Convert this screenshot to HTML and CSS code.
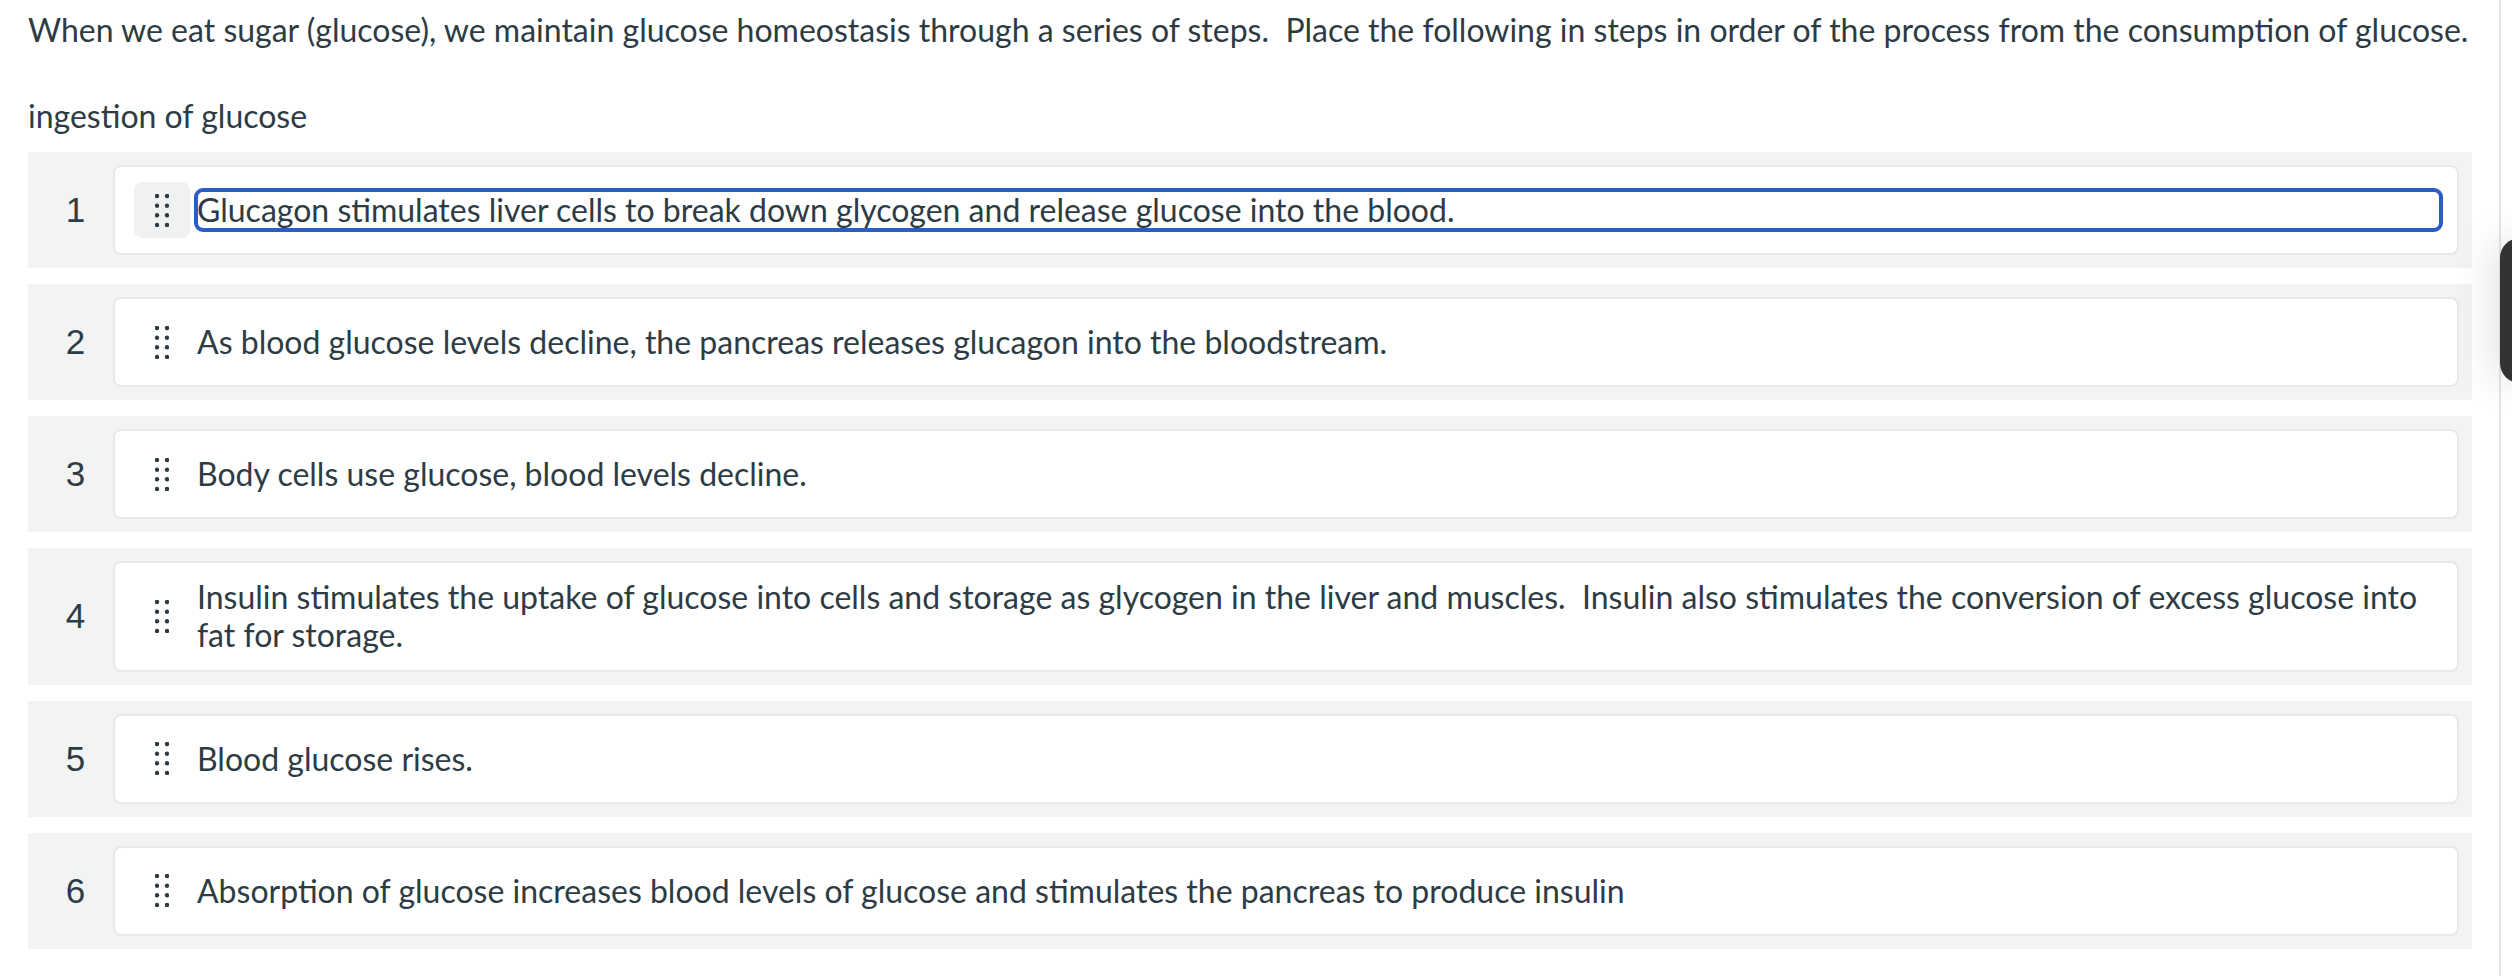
FILE: index.html
```html
<!DOCTYPE html>
<html lang="en">
<head>
<meta charset="utf-8">
<title>Ordering question</title>
<link rel="stylesheet" href="styles.css">
</head>
<body>
<div class="page">
  <main class="quiz">
    <p class="question">When we eat sugar (glucose), we maintain glucose homeostasis through a series of steps.&nbsp; Place the following in steps in order of the process from the consumption of glucose.</p>
    <p class="top-label">ingestion of glucose</p>
    <ol class="order-list">
      <li class="band">
        <span class="num">1</span>
        <div class="card">
          <span class="handle handle-active"><svg class="dots" viewBox="0 0 14 33" width="14" height="33"><g fill="#2d3b45"><circle cx="2" cy="2" r="2.2"/><circle cx="12" cy="2" r="2.2"/><circle cx="2" cy="11.7" r="2.2"/><circle cx="12" cy="11.7" r="2.2"/><circle cx="2" cy="21.3" r="2.2"/><circle cx="12" cy="21.3" r="2.2"/><circle cx="2" cy="31" r="2.2"/><circle cx="12" cy="31" r="2.2"/></g></svg></span>
          <span class="item-text focused">Glucagon stimulates liver cells to break down glycogen and release glucose into the blood.</span>
        </div>
      </li>
      <li class="band">
        <span class="num">2</span>
        <div class="card">
          <span class="handle"><svg class="dots" viewBox="0 0 14 33" width="14" height="33"><g fill="#2d3b45"><circle cx="2" cy="2" r="2.2"/><circle cx="12" cy="2" r="2.2"/><circle cx="2" cy="11.7" r="2.2"/><circle cx="12" cy="11.7" r="2.2"/><circle cx="2" cy="21.3" r="2.2"/><circle cx="12" cy="21.3" r="2.2"/><circle cx="2" cy="31" r="2.2"/><circle cx="12" cy="31" r="2.2"/></g></svg></span>
          <span class="item-text">As blood glucose levels decline, the pancreas releases glucagon into the bloodstream.</span>
        </div>
      </li>
      <li class="band">
        <span class="num">3</span>
        <div class="card">
          <span class="handle"><svg class="dots" viewBox="0 0 14 33" width="14" height="33"><g fill="#2d3b45"><circle cx="2" cy="2" r="2.2"/><circle cx="12" cy="2" r="2.2"/><circle cx="2" cy="11.7" r="2.2"/><circle cx="12" cy="11.7" r="2.2"/><circle cx="2" cy="21.3" r="2.2"/><circle cx="12" cy="21.3" r="2.2"/><circle cx="2" cy="31" r="2.2"/><circle cx="12" cy="31" r="2.2"/></g></svg></span>
          <span class="item-text">Body cells use glucose, blood levels decline.</span>
        </div>
      </li>
      <li class="band">
        <span class="num">4</span>
        <div class="card">
          <span class="handle"><svg class="dots" viewBox="0 0 14 33" width="14" height="33"><g fill="#2d3b45"><circle cx="2" cy="2" r="2.2"/><circle cx="12" cy="2" r="2.2"/><circle cx="2" cy="11.7" r="2.2"/><circle cx="12" cy="11.7" r="2.2"/><circle cx="2" cy="21.3" r="2.2"/><circle cx="12" cy="21.3" r="2.2"/><circle cx="2" cy="31" r="2.2"/><circle cx="12" cy="31" r="2.2"/></g></svg></span>
          <span class="item-text">Insulin stimulates the uptake of glucose into cells and storage as glycogen in the liver and muscles.&nbsp; Insulin also stimulates the conversion of excess glucose into fat for storage.</span>
        </div>
      </li>
      <li class="band">
        <span class="num">5</span>
        <div class="card">
          <span class="handle"><svg class="dots" viewBox="0 0 14 33" width="14" height="33"><g fill="#2d3b45"><circle cx="2" cy="2" r="2.2"/><circle cx="12" cy="2" r="2.2"/><circle cx="2" cy="11.7" r="2.2"/><circle cx="12" cy="11.7" r="2.2"/><circle cx="2" cy="21.3" r="2.2"/><circle cx="12" cy="21.3" r="2.2"/><circle cx="2" cy="31" r="2.2"/><circle cx="12" cy="31" r="2.2"/></g></svg></span>
          <span class="item-text">Blood glucose rises.</span>
        </div>
      </li>
      <li class="band">
        <span class="num">6</span>
        <div class="card">
          <span class="handle"><svg class="dots" viewBox="0 0 14 33" width="14" height="33"><g fill="#2d3b45"><circle cx="2" cy="2" r="2.2"/><circle cx="12" cy="2" r="2.2"/><circle cx="2" cy="11.7" r="2.2"/><circle cx="12" cy="11.7" r="2.2"/><circle cx="2" cy="21.3" r="2.2"/><circle cx="12" cy="21.3" r="2.2"/><circle cx="2" cy="31" r="2.2"/><circle cx="12" cy="31" r="2.2"/></g></svg></span>
          <span class="item-text">Absorption of glucose increases blood levels of glucose and stimulates the pancreas to produce insulin</span>
        </div>
      </li>
    </ol>
  </main>
  <aside class="side-rail"></aside>
</div>
<div class="floating-tab"></div>
</body>
</html>
```
FILE: styles.css
```css
html, body {
  margin: 0;
  padding: 0;
  background: #ffffff;
}

body {
  font-family: Lato, "Noto Sans", "Liberation Sans", sans-serif;
  font-size: 32px;
  color: #2d3b45;
  overflow: hidden;
}

.page {
  display: flex;
  width: 2512px;
  height: 976px;
}

.quiz {
  width: 2444px;
  padding: 6px 0 0 28px;
  flex: none;
}

.side-rail {
  flex: none;
  margin-left: 27px;
  width: 2px;
  background: #e3e5e6;
}

.question {
  margin: 0;
  line-height: 48px;
  white-space: nowrap;
}

.top-label {
  margin: 38px 0 12px;
  line-height: 48px;
}

.order-list {
  list-style: none;
  margin: 0;
  padding: 0;
  display: flex;
  flex-direction: column;
  gap: 16px;
}

.band {
  display: flex;
  align-items: center;
  background: #f2f4f4;
  padding: 13px 13px 13px 0;
}

.num {
  flex: none;
  width: 75px;
  padding-left: 10px;
  text-align: center;
  font-family: "Liberation Sans", Arial, sans-serif;
  font-size: 35px;
  line-height: 40px;
}

.card {
  flex: 1;
  display: flex;
  align-items: center;
  background: #ffffff;
  border: 2px solid #e6e8e9;
  border-radius: 8px;
  padding: 15px 17px 15px 19px;
}

.handle {
  flex: none;
  width: 56px;
  height: 56px;
  border-radius: 8px;
  display: flex;
  align-items: center;
  justify-content: center;
}

.handle-active {
  background: #f0f2f2;
}

.dots {
  display: block;
}

.item-text {
  flex: 1;
  margin-left: 7px;
  line-height: 38.4px;
}

.focused {
  outline: 4px solid #2a5ec6;
  outline-offset: -1px;
  border-radius: 6px;
}

.floating-tab {
  position: fixed;
  left: 2500px;
  top: 238px;
  width: 40px;
  height: 145px;
  background: #333333;
  border-radius: 22px;
  box-shadow: -6px 0 40px rgba(0, 0, 0, 0.12);
}
```
